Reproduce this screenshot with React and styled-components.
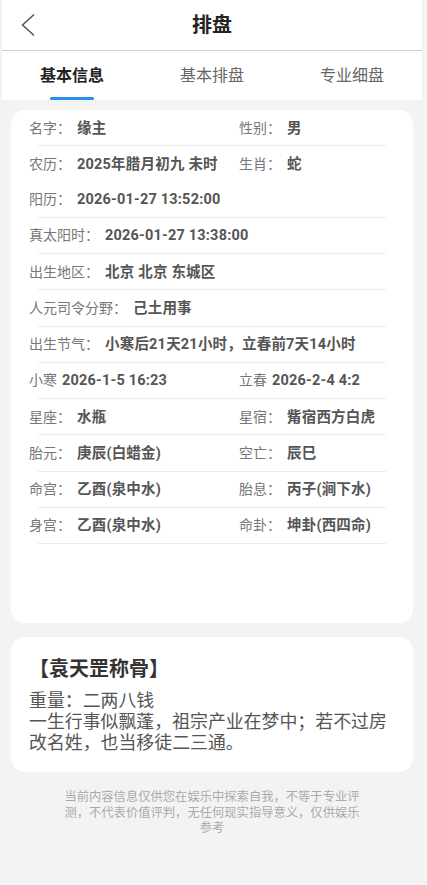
import React, { useState } from 'react';
import styled, { createGlobalStyle } from 'styled-components';

const GlobalStyle = createGlobalStyle`
  html, body {
    margin: 0;
    padding: 0;
    background: #f3f3f3;
  }
  body {
    font-family: Roboto, "Noto Sans CJK SC", "Noto Sans", sans-serif;
  }
`;

const Screen = styled.div`
  min-height: 100vh;
  background: #f3f3f3;
  padding: 0 5px 0 2px;
`;

const Page = styled.div`
  width: 420px;
  display: flex;
  flex-direction: column;
`;

const Header = styled.header`
  display: grid;
  grid-template-columns: 60px 1fr 60px;
  align-items: center;
  height: 50px;
  background: #fff;
  border-bottom: 1px solid #cfcfcf;
`;

const BackButton = styled.button`
  display: flex;
  align-items: center;
  padding: 0 0 0 19px;
  height: 100%;
  border: none;
  background: none;
  cursor: pointer;
`;

const Title = styled.h1`
  margin: 0 0 3px;
  text-align: center;
  font-size: 20px;
  font-weight: 700;
  color: #222;
`;

const TabBar = styled.nav`
  display: grid;
  grid-template-columns: repeat(3, 1fr);
  height: 49px;
  background: #fff;
`;

const Tab = styled.button`
  position: relative;
  border: none;
  background: none;
  font-family: inherit;
  font-size: 16px;
  font-weight: ${p => (p.$active ? 700 : 400)};
  color: ${p => (p.$active ? '#222' : '#666')};
  padding: 0 0 3px;
  cursor: pointer;

  &::after {
    content: '';
    display: ${p => (p.$active ? 'block' : 'none')};
    position: absolute;
    left: 50%;
    bottom: 0;
    width: 44px;
    height: 3px;
    margin-left: -22px;
    border-radius: 2px;
    background: #2b8ef0;
  }
`;

const Card = styled.section`
  margin: ${p => p.$top}px 9px 0;
  background: #fff;
  border-radius: 14px;
  padding: ${p => p.$pad};
`;

const Row = styled.div`
  display: grid;
  grid-template-columns: 210px 1fr;
  align-items: center;
  box-sizing: border-box;
  height: 35.25px;
  padding: 0 18px 3px;
  font-size: 14px;
`;

const Field = styled.div`
  display: flex;
  align-items: baseline;
  white-space: nowrap;
`;

const Label = styled.span`
  color: #777;
  margin-right: ${p => (p.$plain ? 5 : 6)}px;
`;

const Value = styled.span`
  color: #555;
  font-size: 14.5px;
  letter-spacing: 0.2px;
  font-weight: 700;
`;

const Divider = styled.div`
  height: 1px;
  margin: 0 27px;
  background: #ececec;
`;

const BoneTitle = styled.h2`
  margin: 0 0 7px;
  font-size: 20px;
  line-height: 28px;
  font-weight: 700;
  color: #333;
`;

const BoneText = styled.p`
  margin: 0;
  font-size: 17.9px;
  line-height: 21px;
  color: #555;
`;

const Disclaimer = styled.p`
  width: 300px;
  margin: 18px auto 0;
  text-align: center;
  font-size: 12.3px;
  line-height: 15.5px;
  color: #aaa;
`;

const rows = [
  { cells: [['名字：', '缘主'], ['性别：', '男']], line: true },
  { cells: [['农历：', '2025年腊月初九 未时'], ['生肖：', '蛇']], line: false },
  { cells: [['阳历：', '2026-01-27 13:52:00']], line: true },
  { cells: [['真太阳时：', '2026-01-27 13:38:00']], line: true },
  { cells: [['出生地区：', '北京 北京 东城区']], line: true },
  { cells: [['人元司令分野：', '己土用事']], line: true },
  { cells: [['出生节气：', '小寒后21天21小时，立春前7天14小时']], line: true },
  { cells: [['小寒', '2026-1-5 16:23'], ['立春', '2026-2-4 4:2']], line: true, plain: true },
  { cells: [['星座：', '水瓶'], ['星宿：', '觜宿西方白虎']], line: true },
  { cells: [['胎元：', '庚辰(白蜡金)'], ['空亡：', '辰巳']], line: true },
  { cells: [['命宫：', '乙酉(泉中水)'], ['胎息：', '丙子(涧下水)']], line: true },
  { cells: [['身宫：', '乙酉(泉中水)'], ['命卦：', '坤卦(西四命)']], line: true },
];

const tabs = ['基本信息', '基本排盘', '专业细盘'];

const ChevronLeft = () => (
  <svg width="14" height="22" viewBox="0 0 14 22" fill="none">
    <polyline points="12.5,1 1.5,11 12.5,21" stroke="#555" strokeWidth="1.6" strokeLinecap="round" strokeLinejoin="round" />
  </svg>
);

const App = () => {
  const [active, setActive] = useState(0);

  return (
    <>
      <GlobalStyle />
      <Screen>
        <Page>
          <Header>
            <BackButton aria-label="返回">
              <ChevronLeft />
            </BackButton>
            <Title>排盘</Title>
            <span />
          </Header>
          <TabBar>
            {tabs.map((t, i) => (
              <Tab key={t} $active={i === active} onClick={() => setActive(i)}>
                {t}
              </Tab>
            ))}
          </TabBar>

          <Card $top={10} $pad="0 0 79px">
            {rows.map((r, i) => (
              <React.Fragment key={i}>
                <Row>
                  {r.cells.map(([label, value]) => (
                    <Field key={label}>
                      <Label $plain={r.plain}>{label}</Label>
                      <Value>{value}</Value>
                    </Field>
                  ))}
                </Row>
                {r.line && <Divider />}
              </React.Fragment>
            ))}
          </Card>

          <Card $top={14} $pad="18px 18px 19px">
            <BoneTitle>【袁天罡称骨】</BoneTitle>
            <BoneText>
              重量：二两八钱
              <br />
              一生行事似飘蓬，祖宗产业在梦中；若不过房改名姓，也当移徒二三通。
            </BoneText>
          </Card>

          <Disclaimer>
            当前内容信息仅供您在娱乐中探索自我，不等于专业评测，不代表价值评判，无任何现实指导意义，仅供娱乐参考
          </Disclaimer>
        </Page>
      </Screen>
    </>
  );
};

export default App;
